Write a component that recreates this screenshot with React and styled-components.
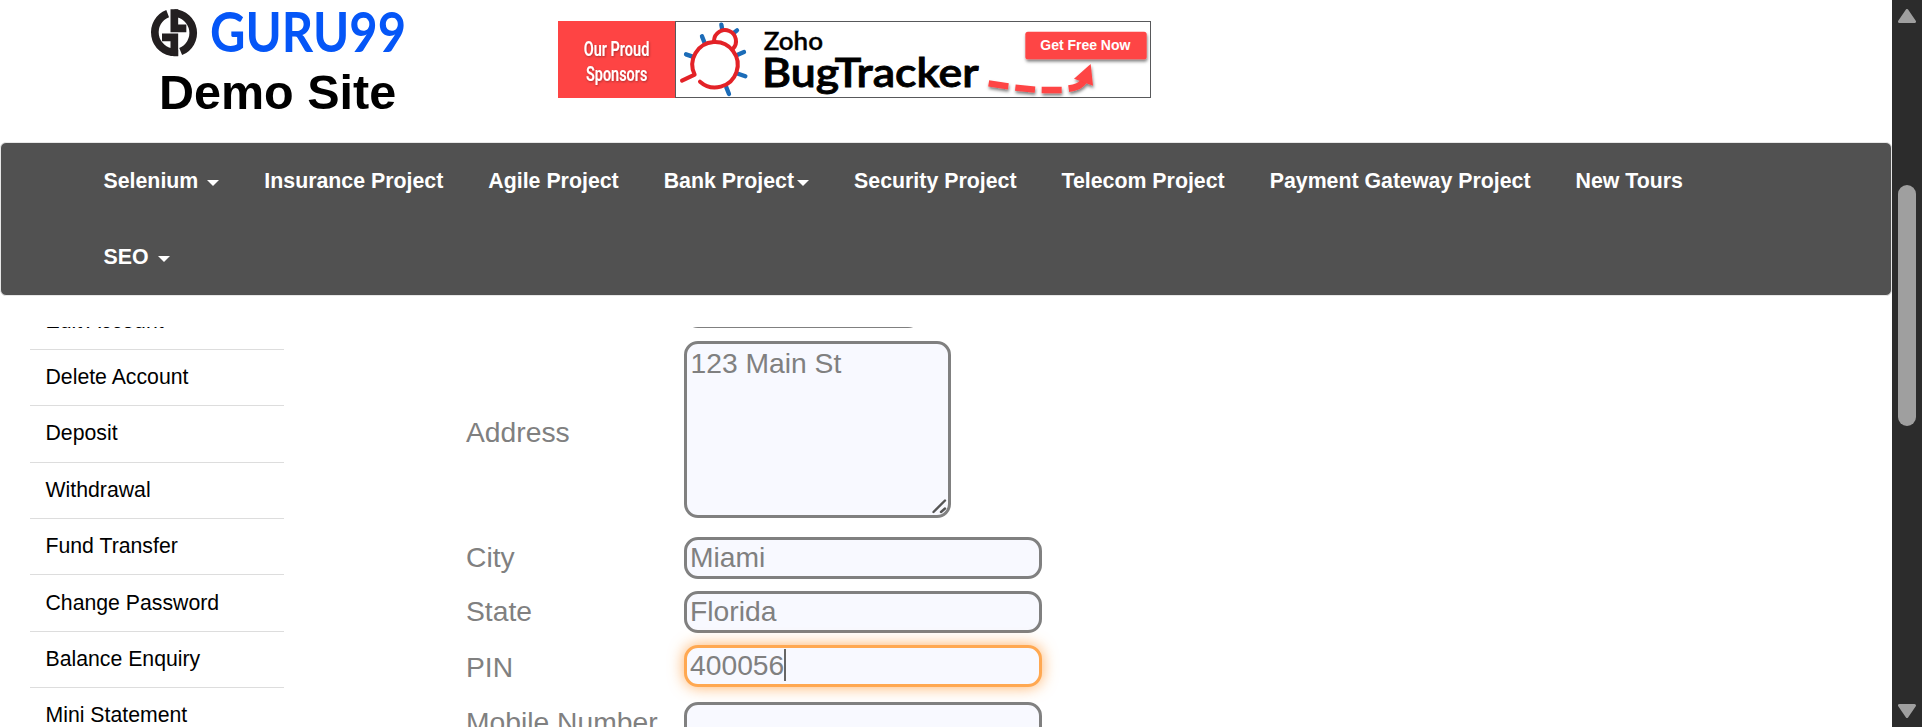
import React from "react";
import styled, { createGlobalStyle, css } from "styled-components";

const Global = createGlobalStyle`
  * { box-sizing: border-box; }
  html, body { margin: 0; padding: 0; }
  body {
    background: #fff;
    color: #000;
    font-family: Arial, "Liberation Sans", sans-serif;
    overflow: hidden;
  }
`;

const Window = styled.div`
  display: flex;
  width: 1922px;
  height: 727px;
  overflow: hidden;
`;

const Page = styled.div`
  display: flex;
  flex-direction: column;
  width: 1892px;
  height: 727px;
`;

const Header = styled.header`
  display: flex;
  height: 142px;
  flex: none;
  padding-left: 148px;
`;

const Brand = styled.div`
  width: 410px;
  padding-top: 7px;
`;

const Logo = styled.svg`
  display: block;
  width: 262px;
  height: 52px;
  overflow: visible;
`;

const SiteName = styled.h2`
  margin: 5px 0 0 11px;
  font-size: 48.5px;
  line-height: 56px;
  font-weight: 700;
  white-space: nowrap;
`;

const Banner = styled.svg`
  display: block;
  width: 593px;
  height: 77px;
  margin-top: 21px;
`;

const Navbar = styled.nav`
  flex: none;
  height: 154px;
  border: 1px solid #e7e7e7;
  border-radius: 6px;
  background: #515151;
  padding-left: 80px;
`;

const NavList = styled.ul`
  display: flex;
  flex-wrap: wrap;
  width: 1680px;
  margin: 0;
  padding: 0;
  list-style: none;
`;

const NavItem = styled.li`
  display: flex;
  align-items: center;
  height: 76px;
  padding: 0 22.5px;
  color: #fff;
  font-size: 21.33px;
  font-weight: 700;
  white-space: nowrap;
`;

const Caret = styled.span`
  margin-left: ${(p) => (p.$tight ? 3 : 9)}px;
  margin-top: 4px;
  border: 6px solid transparent;
  border-top-color: #fff;
  border-bottom: 0;
`;

const Content = styled.main`
  display: flex;
  flex: 1;
  min-height: 0;
  margin-top: 31px;
  padding-left: 30px;
  overflow: hidden;
`;

const Sidebar = styled.ul`
  flex: none;
  width: 254px;
  margin: -33.5px 0 0;
  padding: 0;
  list-style: none;
`;

const SideItem = styled.li`
  display: flex;
  align-items: center;
  height: 56.4px;
  padding-left: 15.5px;
  border-bottom: 1px solid #ddd;
  font-size: 21.25px;
`;

const Form = styled.div`
  margin: -41px 0 0 182px;
  color: gray;
  font-size: 28.25px;
`;

const Row = styled.div`
  display: flex;
  margin-top: ${(p) => p.$gap || 0}px;
`;

const Label = styled.div`
  display: flex;
  align-items: center;
  width: 218px;
  padding-top: ${(p) => p.$drop || 0}px;
  padding-bottom: ${(p) => (p.$drop ? 0 : 2)}px;
  white-space: nowrap;
`;

const Field = styled.div`
  display: flex;
  align-items: center;
  width: ${(p) => p.$width || 358}px;
  height: 42px;
  padding: 0 3px 2px;
  border: 3px solid gray;
  border-radius: 14px;
  background: #f8f9ff;
  ${(p) =>
    p.$focused &&
    css`
      border-color: #ffa851;
      box-shadow: 0 0 15px rgba(255, 150, 50, 0.75);
    `}
`;

const TextArea = styled(Field)`
  position: relative;
  align-items: flex-start;
  width: 267px;
  height: 177px;
  padding: 3px 3.5px;
  line-height: 32px;
`;

const Grip = styled.svg`
  position: absolute;
  right: 1px;
  bottom: 1px;
  width: 15px;
  height: 15px;
`;

const InputCaret = styled.span`
  width: 1.5px;
  height: 32px;
  background: #666;
`;

const Scrollbar = styled.div`
  display: flex;
  flex-direction: column;
  align-items: center;
  width: 30px;
  height: 727px;
  padding: 9px 0;
  background: #2c2c2c;
`;

const Arrow = styled.svg`
  flex: none;
  width: 18px;
  height: 14px;
  ${(p) => p.$down && "transform: rotate(180deg);"}
`;

const Track = styled.div`
  flex: 1;
  padding-top: 162px;
`;

const Thumb = styled.div`
  width: 18px;
  height: 241px;
  border-radius: 9px;
  background: #9f9f9f;
`;

const navItems = [
  { text: "Selenium", caret: true },
  { text: "Insurance Project" },
  { text: "Agile Project" },
  { text: "Bank Project", caret: true, tight: true },
  { text: "Security Project" },
  { text: "Telecom Project" },
  { text: "Payment Gateway Project" },
  { text: "New Tours" },
  { text: "SEO", caret: true },
];

const sideItems = [
  "Edit Account",
  "Delete Account",
  "Deposit",
  "Withdrawal",
  "Fund Transfer",
  "Change Password",
  "Balance Enquiry",
  "Mini Statement",
];

const LogoArt = () => (
  <Logo viewBox="54 21 786 156">
    <g fill="none" stroke="#231f20" strokeWidth="23">
      <path d="M113 41 A60 60 0 0 0 133 157 V112 H96" />
      <path d="M133 39 A60 60 0 0 1 152 154.6" />
      <path d="M133 28 V85 H169" />
      <path d="M133 150 V168" />
    </g>
    <text x="240" y="156" fontFamily="Lato, sans-serif" fontWeight="700" fontSize="166" fill="#0556f7" textLength="588" lengthAdjust="spacingAndGlyphs">
      GURU99
    </text>
  </Logo>
);

const BannerArt = () => (
  <Banner viewBox="24 33 1779 231" preserveAspectRatio="none">
    <defs>
      <filter id="lift" x="-10%" y="-20%" width="120%" height="160%">
        <feDropShadow dx="2" dy="7" stdDeviation="4" floodColor="#000" floodOpacity="0.5" />
      </filter>
      <filter id="textShade" x="-10%" y="-20%" width="120%" height="160%">
        <feDropShadow dx="2" dy="3" stdDeviation="3" floodColor="#000" floodOpacity="0.35" />
      </filter>
    </defs>
    <rect x="24" y="33" width="352" height="231" fill="#fe4444" />
    <rect x="376.5" y="34.5" width="1425" height="228" fill="#fff" stroke="#58595b" strokeWidth="3" />
    <g fontFamily="Roboto, sans-serif" fontWeight="600" fontSize="59" fill="#fff" filter="url(#textShade)">
      <text x="101" y="137" textLength="197" lengthAdjust="spacingAndGlyphs">Our Proud</text>
      <text x="108" y="212" textLength="184" lengthAdjust="spacingAndGlyphs">Sponsors</text>
    </g>
    <g fill="none" strokeWidth="13" strokeLinecap="round" stroke="#1c6cb8">
      <path d="M514 44L517 60 M561 61L551 69 M456 79L464 99 M408 133L428 140 M582 126L563 134 M586 199L564 191 M537 252L529 232" />
    </g>
    <g fill="none" strokeWidth="12" strokeLinecap="round" strokeLinejoin="round" stroke="#e32227">
      <path d="M396 212L434 194 A68 68 0 1 1 450 215" />
      <path d="M492 92 A33 33 0 1 1 549 116" />
    </g>
    <g fontFamily="Lato, sans-serif" fill="#000" stroke="#000">
      <text x="641" y="119" fontWeight="600" fontSize="72" strokeWidth="1" textLength="178" lengthAdjust="spacingAndGlyphs">Zoho</text>
      <text x="636" y="230" fontWeight="600" fontSize="118" strokeWidth="2.5" textLength="650" lengthAdjust="spacingAndGlyphs">BugTracker</text>
    </g>
    <g filter="url(#lift)">
      <rect x="1426" y="65" width="364" height="83" rx="8" fill="#fe4444" />
      <path d="M1316 220L1375 229 M1396 233L1455 239 M1475 240L1535 240" stroke="#fe4444" strokeWidth="19" fill="none" />
      <path d="M1556 236 Q1590 231 1601 214" stroke="#fe4444" strokeWidth="20" fill="none" />
      <path d="M1622 162L1629 227L1572 206Z" fill="#fe4444" />
    </g>
    <text x="1471" y="119" fontFamily="Liberation Sans, sans-serif" fontWeight="700" fontSize="42" fill="#fff" textLength="270" lengthAdjust="spacing">
      Get Free Now
    </text>
  </Banner>
);

const arrowShape = <path d="M9 1.5L16.5 12.5H1.5Z" fill="#9f9f9f" stroke="#9f9f9f" strokeWidth="3" strokeLinejoin="round" />;

export default function App() {
  return (
    <Window>
      <Global />
      <Page>
        <Header>
          <Brand>
            <LogoArt />
            <SiteName>Demo Site</SiteName>
          </Brand>
          <BannerArt />
        </Header>
        <Navbar>
          <NavList>
            {navItems.map((item) => (
              <NavItem key={item.text}>
                {item.text}
                {item.caret && <Caret $tight={item.tight} />}
              </NavItem>
            ))}
          </NavList>
        </Navbar>
        <Content>
          <Sidebar>
            {sideItems.map((text) => (
              <SideItem key={text}>{text}</SideItem>
            ))}
          </Sidebar>
          <Form>
            <Row>
              <Label />
              <Field $width={238} />
            </Row>
            <Row $gap={13}>
              <Label $drop={6}>Address</Label>
              <TextArea>
                123 Main St
                <Grip viewBox="0 0 15 15">
                  <path d="M1.5 13L13 1.5 M9 13L13 9.5" stroke="#555" strokeWidth="2.4" strokeLinecap="round" />
                </Grip>
              </TextArea>
            </Row>
            <Row $gap={19}>
              <Label>City</Label>
              <Field>Miami</Field>
            </Row>
            <Row $gap={12}>
              <Label>State</Label>
              <Field>Florida</Field>
            </Row>
            <Row $gap={12}>
              <Label $drop={2}>PIN</Label>
              <Field $focused>
                400056
                <InputCaret />
              </Field>
            </Row>
            <Row $gap={15}>
              <Label>Mobile Number</Label>
              <Field />
            </Row>
          </Form>
        </Content>
      </Page>
      <Scrollbar>
        <Arrow viewBox="0 0 18 14">{arrowShape}</Arrow>
        <Track>
          <Thumb />
        </Track>
        <Arrow $down viewBox="0 0 18 14">{arrowShape}</Arrow>
      </Scrollbar>
    </Window>
  );
}
